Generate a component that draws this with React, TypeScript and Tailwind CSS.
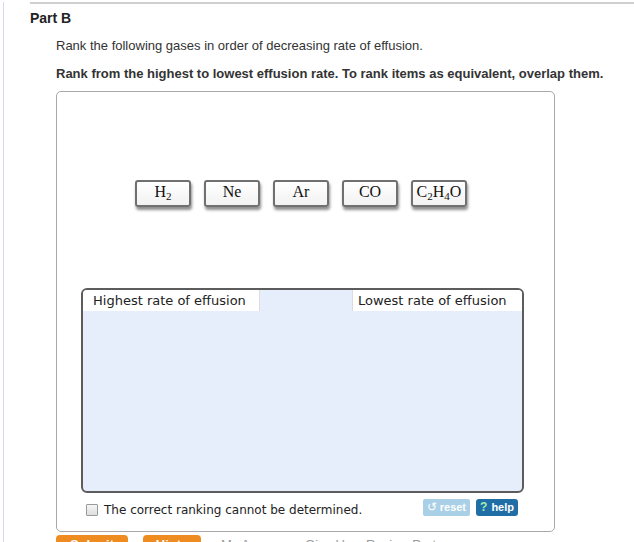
import React from 'react';

const sub = 'text-[11px] relative top-[3px] align-baseline';

const chips: { key: string; label: React.ReactNode }[] = [
  { key: 'h2', label: <>H<sub className={sub}>2</sub></> },
  { key: 'ne', label: 'Ne' },
  { key: 'ar', label: 'Ar' },
  { key: 'co', label: 'CO' },
  {
    key: 'c2h4o',
    label: (
      <>
        C<sub className={sub}>2</sub>H<sub className={sub}>4</sub>O
      </>
    ),
  },
];

const App: React.FC = () => {
  return (
    <div className="w-[634px] h-[542px] overflow-hidden bg-white pl-[3px] font-['Liberation_Sans',Arial,sans-serif] text-[#333]">
      <div className="h-full border-l border-[#d3dce8] pl-[26px]">
        {/* top rule */}
        <div className="mt-[2px] h-[2px] bg-[#d0d0d0]" />

        <h2 className="mt-[6px] text-[14px] leading-[16px] font-bold text-[#222]">Part B</h2>

        <div className="pl-[26px]">
          <p className="mt-[12px] text-[13px] leading-[15px] text-[#333]">
            Rank the following gases in order of decreasing rate of effusion.
          </p>
          <p className="mt-[13px] text-[13px] leading-[15px] font-bold text-[#333]">
            Rank from the highest to lowest effusion rate. To rank items as equivalent, overlap them.
          </p>

          {/* ranking widget */}
          <div className="mt-[10px] w-[499px] h-[441px] border border-[#a8a8a8] rounded-[5px] pl-[24px]">
            <div className="w-[443px]">
              {/* chips */}
              <div className="mt-[88px] flex justify-center gap-[13px] pr-[3px]">
                {chips.map((c) => (
                  <div
                    key={c.key}
                    className="w-[56px] h-[27px] flex items-center justify-center rounded-[3px] border-2 border-[#707070] bg-gradient-to-b from-white to-[#f2f2f2] shadow-[1px_3px_3px_rgba(0,0,0,0.45)] font-['Liberation_Serif','DejaVu_Serif',serif] text-[16px] leading-none text-[#111]"
                  >
                    <span className="-mt-[3px]">{c.label}</span>
                  </div>
                ))}
              </div>

              {/* drop area */}
              <div className="mt-[81px] h-[205px] border-2 border-[#5c5c5c] rounded-[6px] bg-[#e6edfb] font-['DejaVu_Sans',Verdana,sans-serif] text-[13px] text-[#222]">
                <div className="flex justify-between h-[21px]">
                  <div className="w-[177px] bg-white border-r border-[#dcdcdc] pl-[10px] leading-[22px] rounded-tl-[4px]">
                    Highest rate of effusion
                  </div>
                  <div className="w-[170px] bg-white border-l border-[#dcdcdc] pl-[5px] leading-[22px] rounded-tr-[4px]">
                    Lowest rate of effusion
                  </div>
                </div>
              </div>

              {/* footer row */}
              <div className="mt-[5px] flex items-start justify-between pr-[6px]">
                <label className="mt-[5px] flex items-center gap-[6px] pl-[5px] font-['DejaVu_Sans',Verdana,sans-serif] text-[12px] leading-[14px] text-[#222]">
                  <span className="w-[12px] h-[12px] border border-[#9a9a9a] bg-gradient-to-b from-[#f6f6f6] to-[#dedede] rounded-[1px]" />
                  The correct ranking cannot be determined.
                </label>
                <div className="mt-[1px] flex gap-[6px] font-['Liberation_Sans',Arial,sans-serif] text-[11px] font-bold text-white leading-[17px]">
                  <div className="h-[17px] px-[4px] rounded-[2px] bg-[#a9d0e6] flex items-center gap-[3px]">
                    <span className="text-[12px] font-normal">↺</span>reset
                  </div>
                  <div className="h-[17px] px-[4px] rounded-[3px] bg-[#1f6ea6] flex items-center gap-[4px]">
                    <span className="text-[#a6ecb0] text-[12px]">?</span>help
                  </div>
                </div>
              </div>
            </div>
          </div>

          {/* bottom actions */}
          <div className="mt-[3px] flex items-start gap-[15px] text-[13px]">
            <div className="w-[72px] h-[24px] rounded-[4px] bg-[#ee8b21] text-white font-bold text-center leading-[16px] pt-[2px]">
              Submit
            </div>
            <div className="w-[58px] h-[24px] rounded-[4px] bg-[#ee8b21] text-white font-bold text-center leading-[16px] pt-[2px]">
              Hints
            </div>
            <div className="flex gap-[14px] pt-[2px] leading-[16px] text-[#9a9a9a] ml-[5px]">
              <span>My Answers</span>
              <span>Give Up</span>
              <span>Review Part</span>
            </div>
          </div>
        </div>
      </div>
    </div>
  );
};

export default App;
